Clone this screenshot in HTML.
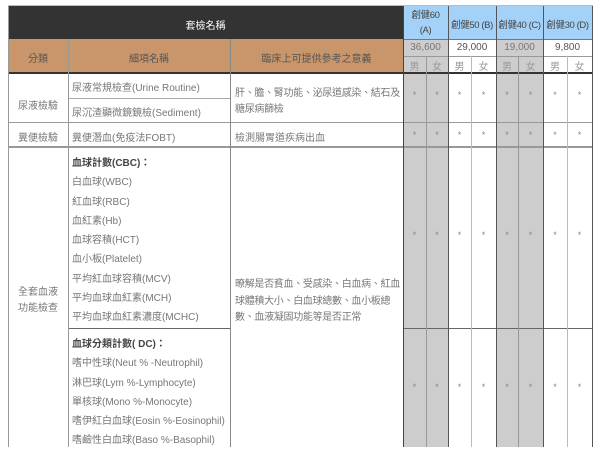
<!DOCTYPE html>
<html><head><meta charset="utf-8"><style>
*{margin:0;padding:0;box-sizing:border-box}
body{width:600px;height:447px;background:#fff;position:relative;overflow:hidden;font-family:"Liberation Sans","Noto Sans CJK TC",sans-serif;font-size:10px;color:#777}
.a{position:absolute}
.t{position:absolute;white-space:nowrap}
.c{text-align:center}
.v{position:absolute;width:1px}
.h{position:absolute;height:1px}
.s{position:absolute;text-align:center;font-size:9px;color:#888}
.b{font-size:9.5px;letter-spacing:-0.4px}
</style></head><body>
<div class="h" style="left:8px;top:5px;width:585px;background:#bbb"></div>
<div class="a" style="left:8px;top:6px;width:395px;height:33px;background:#333"></div>
<div class="t c" style="left:8px;width:395px;top:17px;color:#fff">套檢名稱</div>
<div class="a" style="left:403px;top:6px;width:189px;height:33px;background:#a3d1f7"></div>
<div class="t c b" style="left:403px;width:45px;top:8px;line-height:15px;color:#444">創健60<br>(A)</div>
<div class="t c b" style="left:448px;width:48px;top:17px;color:#444">創健50 (B)</div>
<div class="t c b" style="left:496px;width:47px;top:17px;color:#444">創健40 (C)</div>
<div class="t c b" style="left:543px;width:49px;top:17px;color:#444">創健30 (D)</div>
<div class="a" style="left:8px;top:39px;width:395px;height:33px;background:#c9956a"></div>
<div class="t c" style="left:8px;width:60px;top:50px;color:#555">分類</div>
<div class="t c" style="left:68px;width:162px;top:50px;color:#555">細項名稱</div>
<div class="t c" style="left:230px;width:173px;top:50px;color:#555">臨床上可提供參考之意義</div>
<div class="a" style="left:403px;top:39px;width:45px;height:408px;background:#cdcdcd"></div>
<div class="a" style="left:496px;top:39px;width:47px;height:408px;background:#cdcdcd"></div>
<div class="t c" style="left:403px;width:45px;top:42px">36,600</div>
<div class="t c" style="left:448px;width:48px;top:42px;color:#555">29,000</div>
<div class="t c" style="left:496px;width:47px;top:42px">19,000</div>
<div class="t c" style="left:543px;width:49px;top:42px;color:#555">9,800</div>
<div class="t c" style="left:403px;width:23px;top:58px;color:#999">男</div>
<div class="t c" style="left:426px;width:22px;top:58px;color:#999">女</div>
<div class="t c" style="left:448px;width:23px;top:58px;color:#999">男</div>
<div class="t c" style="left:471px;width:25px;top:58px;color:#999">女</div>
<div class="t c" style="left:496px;width:22px;top:58px;color:#999">男</div>
<div class="t c" style="left:518px;width:25px;top:58px;color:#999">女</div>
<div class="t c" style="left:543px;width:24px;top:58px;color:#999">男</div>
<div class="t c" style="left:567px;width:25px;top:58px;color:#999">女</div>
<div class="h" style="left:403px;top:39px;width:189px;background:#777"></div>
<div class="h" style="left:403px;top:56px;width:189px;background:#999"></div>
<div class="a" style="left:8px;top:72px;width:585px;height:2px;background:#333"></div>
<div class="h" style="left:68px;top:98px;width:162px;background:#aaa"></div>
<div class="h" style="left:8px;top:122px;width:585px;background:#999"></div>
<div class="a" style="left:8px;top:146px;width:585px;height:2px;background:#999"></div>
<div class="h" style="left:68px;top:328px;width:162px;background:#666"></div>
<div class="h" style="left:403px;top:328px;width:189px;background:#666"></div>
<div class="v" style="left:8px;top:6px;height:441px;background:#999"></div>
<div class="v" style="left:68px;top:39px;height:408px;background:#999"></div>
<div class="v" style="left:230px;top:39px;height:408px;background:#888"></div>
<div class="v" style="left:403px;top:6px;height:441px;background:#444"></div>
<div class="v" style="left:448px;top:6px;height:441px;background:#555"></div>
<div class="v" style="left:496px;top:6px;height:441px;background:#555"></div>
<div class="v" style="left:543px;top:6px;height:441px;background:#555"></div>
<div class="v" style="left:592px;top:6px;height:441px;background:#555"></div>
<div class="v" style="left:426px;top:56px;height:391px;background:#999"></div>
<div class="v" style="left:471px;top:56px;height:391px;background:#bbb"></div>
<div class="v" style="left:518px;top:56px;height:391px;background:#999"></div>
<div class="v" style="left:567px;top:56px;height:391px;background:#bbb"></div>
<div class="t c" style="left:8px;width:60px;top:97px">尿液檢驗</div>
<div class="t" style="left:72px;top:79px">尿液常規檢查(Urine Routine)</div>
<div class="t" style="left:72px;top:104px">尿沉渣顯微鏡鏡檢(Sediment)</div>
<div class="t" style="left:235px;top:86px;line-height:16px;letter-spacing:-0.3px">肝、膽、腎功能、泌尿道感染、結石及<br>糖尿病篩檢</div>
<div class="t c" style="left:8px;width:60px;top:129px">糞便檢驗</div>
<div class="t" style="left:72px;top:129px">糞便潛血(免疫法FOBT)</div>
<div class="t" style="left:235px;top:129px">檢測腸胃道疾病出血</div>
<div class="t c" style="left:8px;width:60px;top:285px;line-height:16px">全套血液<br>功能檢查</div>
<div class="t" style="left:72px;top:154px;line-height:19.3px">
<b style="color:#444">血球計數(CBC)：</b><br>白血球(WBC)<br>紅血球(RBC)<br>血紅素(Hb)<br>血球容積(HCT)<br>血小板(Platelet)<br>平均紅血球容積(MCV)<br>平均血球血紅素(MCH)<br>平均血球血紅素濃度(MCHC)</div>
<div class="t" style="left:72px;top:335px;line-height:19.3px">
<b style="color:#444">血球分類計數( DC)：</b><br>嗜中性球(Neut % -Neutrophil)<br>淋巴球(Lym %-Lymphocyte)<br>單核球(Mono %-Monocyte)<br>嗜伊紅白血球(Eosin %-Eosinophil)<br>嗜鹼性白血球(Baso %-Basophil)</div>
<div class="t" style="left:235px;top:277px;line-height:16.5px;letter-spacing:-0.3px">暸解是否貧血、受感染、白血病、紅血<br>球體積大小、白血球總數、血小板總<br>數、血液凝固功能等是否正常</div>
<div id="st"></div>
<script>
var xs=[[403,23],[426,22],[448,23],[471,25],[496,22],[518,25],[543,24],[567,25]];
var ys=[90,130,230,382];var h='';
ys.forEach(function(y){xs.forEach(function(x){h+='<div class="s" style="left:'+x[0]+'px;width:'+x[1]+'px;top:'+y+'px">*</div>';});});
document.getElementById('st').innerHTML=h;
</script>
</body></html>
